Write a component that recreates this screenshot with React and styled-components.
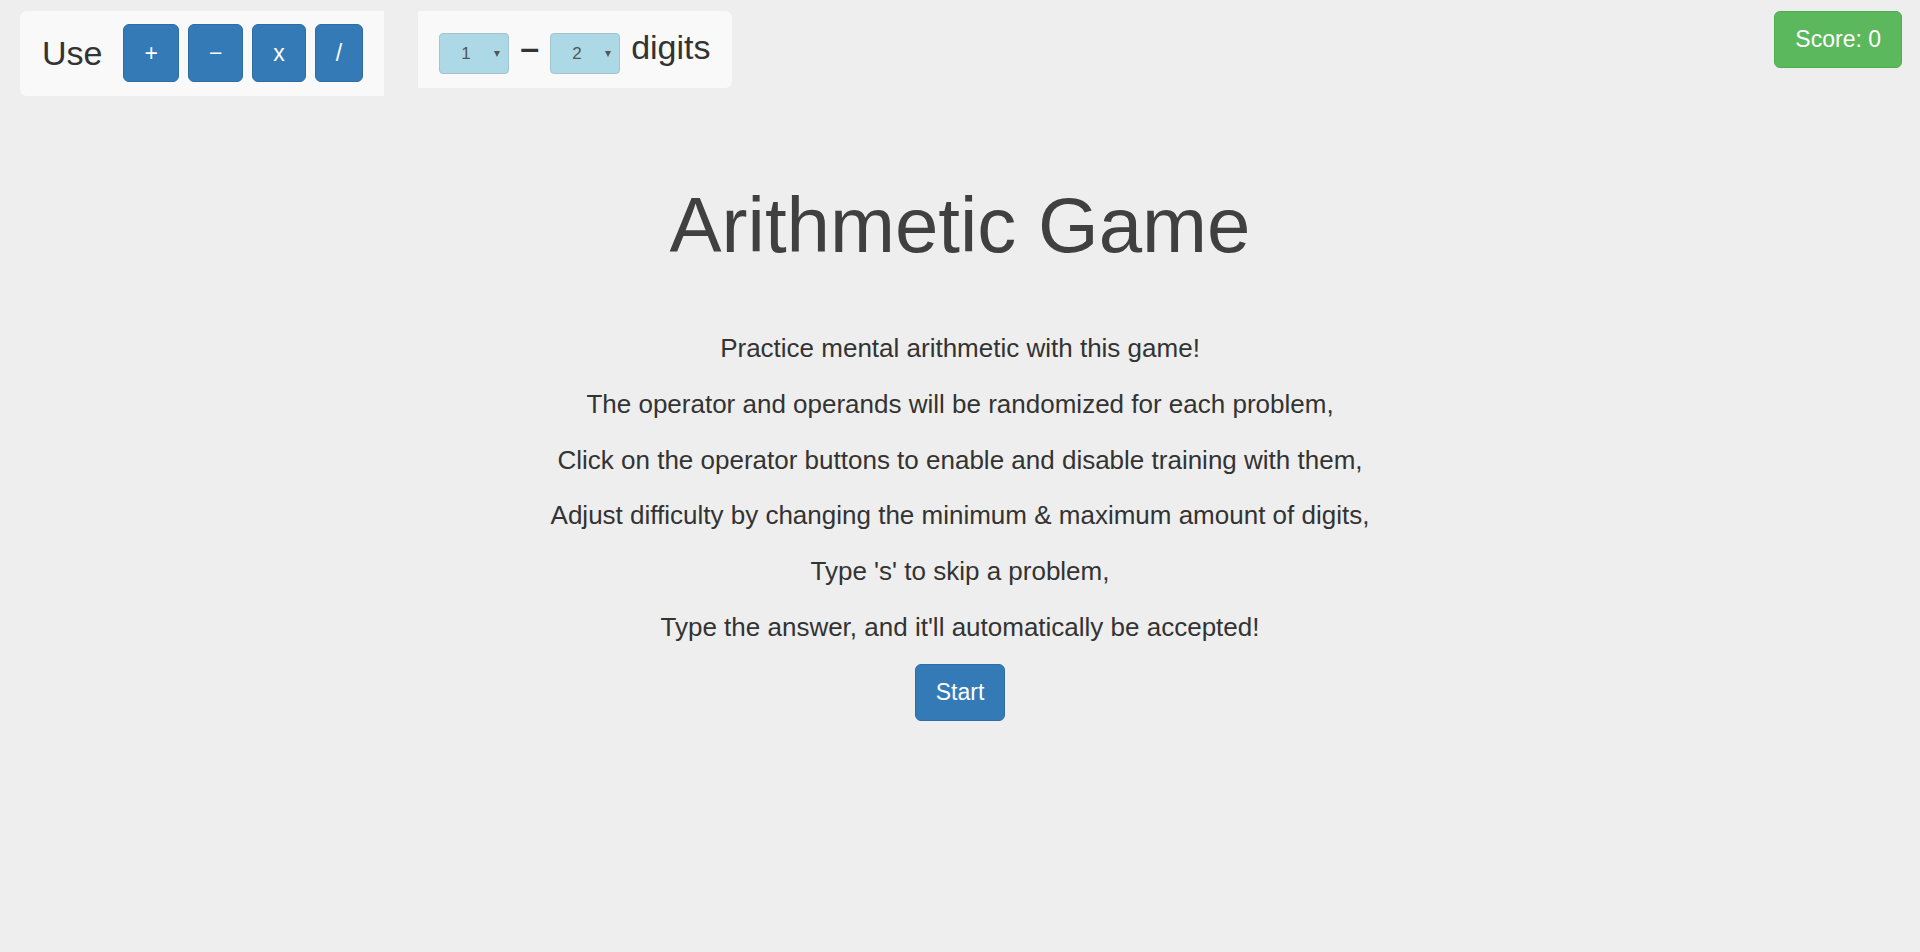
import React, { useState } from 'react';
import styled, { createGlobalStyle } from 'styled-components';

const GlobalStyle = createGlobalStyle`
  html, body {
    margin: 0;
    padding: 0;
    background: #eeeeee;
    font-family: "Liberation Sans", Arial, sans-serif;
    color: #333;
  }
`;

const Page = styled.div`
  min-height: 952px;
  background: #eeeeee;
`;

const Header = styled.header`
  display: flex;
  align-items: flex-start;
  padding: 11px 18px 0 20px;
`;

const Panel = styled.div`
  display: flex;
  align-items: ${(p) => (p.$baseline ? 'baseline' : 'center')};
  background: #f9f9f9;
  border-radius: ${(p) => (p.$side === 'right' ? '0 7px 7px 0' : '7px 0 0 7px')};
  padding: ${(p) => p.$pad};
  gap: ${(p) => p.$gap};
  margin-right: 34px;
`;

const Label = styled.span`
  font-size: 34px;
  line-height: 38px;
  color: #333;
  margin-right: ${(p) => p.$mr || '0'};
`;

const Dash = styled.span`
  font-size: 34px;
  line-height: 38px;
  font-weight: bold;
  color: #333;
`;

const Button = styled.button`
  font-family: "Liberation Sans", Arial, sans-serif;
  font-size: 23px;
  line-height: 27px;
  color: #fff;
  background: ${(p) => (p.$variant === 'success' ? '#5cb85c' : '#337ab7')};
  border: 1px solid ${(p) => (p.$variant === 'success' ? '#4cae4c' : '#2e6da4')};
  border-radius: 6px;
  padding: ${(p) => (p.$tall ? '14.5px 20px' : '14px 20px')};
  cursor: pointer;
  opacity: ${(p) => (p.$off ? 0.45 : 1)};
`;

const ScoreButton = styled(Button)`
  margin-left: auto;
`;

const SelectWrap = styled.span`
  position: relative;
  display: inline-flex;

  &::after {
    content: '';
    position: absolute;
    right: 9px;
    top: 18px;
    border-left: 3.5px solid transparent;
    border-right: 3.5px solid transparent;
    border-top: 6px solid #555;
    pointer-events: none;
  }
`;

const Select = styled.select`
  appearance: none;
  -webkit-appearance: none;
  width: 70px;
  height: 41px;
  box-sizing: border-box;
  padding: 0 0 0 21px;
  font-family: "Liberation Sans", Arial, sans-serif;
  font-size: 17px;
  color: #555;
  background: #add8e6;
  border: 1px solid #a3c4cf;
  border-radius: 4px;
  outline: none;
`;

const Main = styled.main`
  display: flex;
  flex-direction: column;
  align-items: center;
  text-align: center;
`;

const Title = styled.h1`
  margin: 84px 0 0;
  font-size: 78px;
  font-weight: normal;
  line-height: normal;
  color: #404040;
`;

const Intro = styled.div`
  display: flex;
  flex-direction: column;
  gap: 25.8px;
  margin-top: 62px;
`;

const Para = styled.p`
  margin: 0;
  font-size: 26px;
  line-height: 30px;
  color: #333;
`;

const StartButton = styled(Button)`
  margin-top: 22px;
`;

const ops = ['+', '−', 'x', '/'];
const lines = [
  'Practice mental arithmetic with this game!',
  'The operator and operands will be randomized for each problem,',
  'Click on the operator buttons to enable and disable training with them,',
  'Adjust difficulty by changing the minimum & maximum amount of digits,',
  "Type 's' to skip a problem,",
  "Type the answer, and it'll automatically be accepted!",
];

export default function App() {
  const [enabled, setEnabled] = useState({ '+': true, '−': true, x: true, '/': true });
  const [min, setMin] = useState('1');
  const [max, setMax] = useState('2');

  return (
    <Page>
      <GlobalStyle />
      <Header>
        <Panel $side="left" $pad="13px 21px 14px 22px" $gap="9px">
          <Label $mr="12px">Use</Label>
          {ops.map((op) => (
            <Button
              key={op}
              $tall
              $off={!enabled[op]}
              onClick={() => setEnabled({ ...enabled, [op]: !enabled[op] })}
            >
              {op}
            </Button>
          ))}
        </Panel>
        <Panel $side="right" $baseline $pad="17px 21px 14px 21px" $gap="11px">
          <SelectWrap>
            <Select value={min} onChange={(e) => setMin(e.target.value)}>
              {[1, 2, 3, 4, 5].map((n) => (
                <option key={n}>{n}</option>
              ))}
            </Select>
          </SelectWrap>
          <Dash>–</Dash>
          <SelectWrap>
            <Select value={max} onChange={(e) => setMax(e.target.value)}>
              {[1, 2, 3, 4, 5].map((n) => (
                <option key={n}>{n}</option>
              ))}
            </Select>
          </SelectWrap>
          <Label>digits</Label>
        </Panel>
        <ScoreButton $variant="success">Score: 0</ScoreButton>
      </Header>
      <Main>
        <Title>Arithmetic Game</Title>
        <Intro>
          {lines.map((l) => (
            <Para key={l}>{l}</Para>
          ))}
        </Intro>
        <StartButton>Start</StartButton>
      </Main>
    </Page>
  );
}
